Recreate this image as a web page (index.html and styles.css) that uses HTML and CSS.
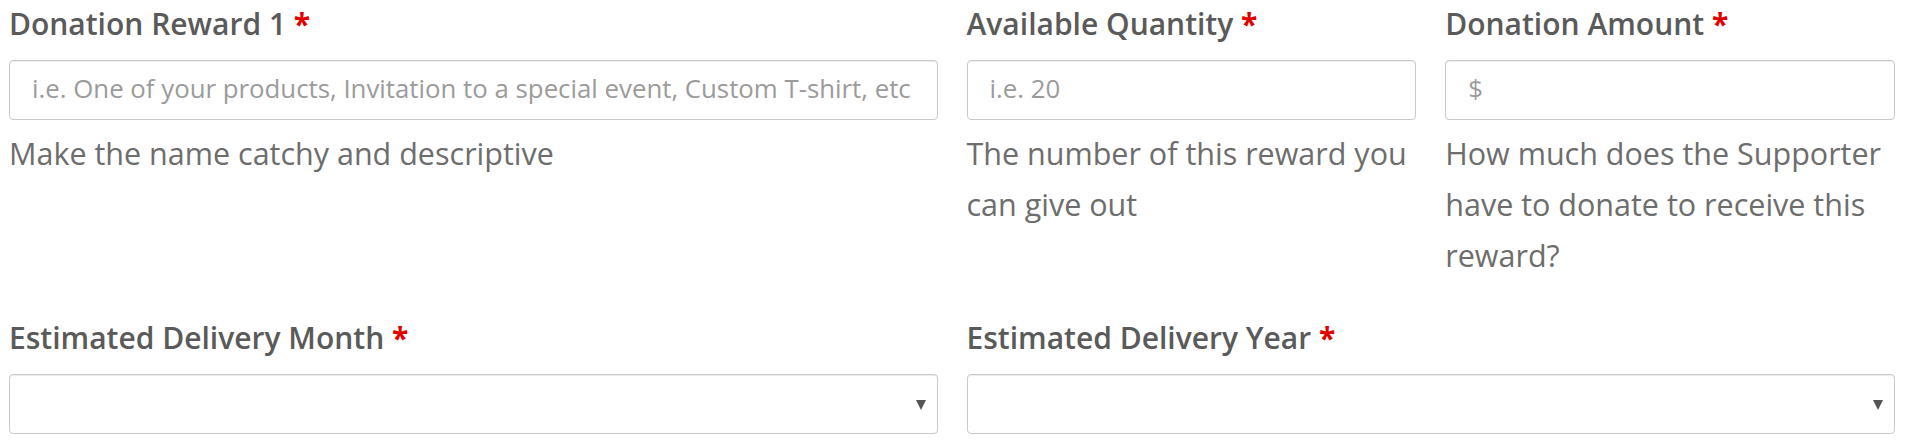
FILE: index.html
```html
<!DOCTYPE html>
<html lang="en">
<head>
<meta charset="utf-8">
<title>Donation Reward</title>
<link rel="stylesheet" href="styles.css">
</head>
<body>
<form class="form">
  <div class="row row-4">
    <div class="field span-2">
      <label class="label" for="reward">Donation Reward 1 <span class="req">*</span></label>
      <input class="input" id="reward" type="text" placeholder="i.e. One of your products, Invitation to a special event, Custom T-shirt, etc">
      <p class="help">Make the name catchy and descriptive</p>
    </div>
    <div class="field">
      <label class="label" for="qty">Available Quantity <span class="req">*</span></label>
      <input class="input" id="qty" type="text" placeholder="i.e. 20">
      <p class="help">The number of this reward you can give out</p>
    </div>
    <div class="field">
      <label class="label" for="amount">Donation Amount <span class="req">*</span></label>
      <input class="input" id="amount" type="text" placeholder="$">
      <p class="help">How much does the Supporter have to donate to receive this reward?</p>
    </div>
  </div>
  <div class="row row-2">
    <div class="field">
      <label class="label" for="month">Estimated Delivery Month <span class="req">*</span></label>
      <div class="select-wrap">
        <select class="input select" id="month"><option></option></select>
      </div>
    </div>
    <div class="field">
      <label class="label" for="year">Estimated Delivery Year <span class="req">*</span></label>
      <div class="select-wrap">
        <select class="input select" id="year"><option></option></select>
      </div>
    </div>
  </div>
</form>
</body>
</html>
```
FILE: styles.css
```css
html, body {
  margin: 0;
  padding: 0;
  background: #ffffff;
}

body {
  font-family: "Open Sans", "Liberation Sans", sans-serif;
}

.form {
  display: flex;
  flex-direction: column;
  gap: 33px;
  padding: 0 10px 0 9px;
}

.row {
  display: grid;
  column-gap: 29px;
}

.row-4 {
  grid-template-columns: repeat(4, minmax(0, 1fr));
}

.row-2 {
  grid-template-columns: repeat(2, minmax(0, 1fr));
}

.span-2 {
  grid-column: span 2;
}

.field {
  min-width: 0;
}

.label {
  display: block;
  margin: 0 0 12px;
  font-size: 30px;
  font-weight: 600;
  line-height: 48px;
  color: #5a5a5a;
  white-space: nowrap;
}

.req {
  color: #e00000;
  font-weight: 700;
}

.input {
  display: block;
  box-sizing: border-box;
  width: 100%;
  height: 60px;
  margin: 0;
  padding: 0 4px 5px 22px;
  border: 1px solid #c9c9c9;
  border-radius: 4px;
  box-shadow: inset 0 1px 1px rgba(0, 0, 0, 0.075);
  background: #ffffff;
  font-family: "Open Sans", "Liberation Sans", sans-serif;
  font-size: 25.8px;
  color: #555555;
  outline: none;
}

.input::placeholder {
  color: #9b9b9b;
  opacity: 1;
}

.select {
  -webkit-appearance: none;
  appearance: none;
}

.select-wrap {
  position: relative;
}

.select-wrap::after {
  content: "";
  position: absolute;
  right: 12px;
  top: 50%;
  margin-top: -4px;
  width: 0;
  height: 0;
  border-left: 5px solid transparent;
  border-right: 5px solid transparent;
  border-top: 10px solid #555555;
  pointer-events: none;
}

.help {
  margin: 8px 0 0;
  font-size: 30.5px;
  line-height: 51px;
  color: #6d6d6d;
}
```
